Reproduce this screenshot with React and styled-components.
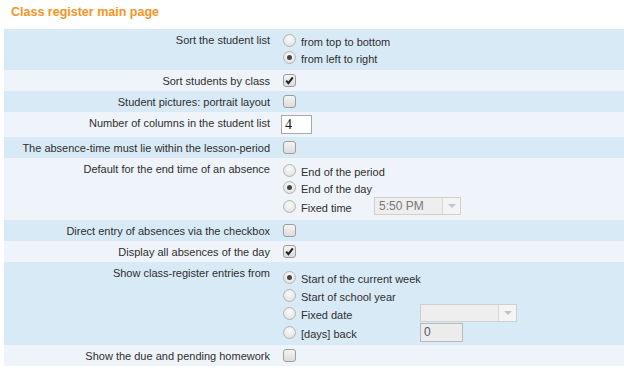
import React from 'react'
import styled, { createGlobalStyle } from 'styled-components'

const GlobalStyle = createGlobalStyle`
  html, body {
    margin: 0;
    padding: 0;
    background: #fff;
  }
  body {
    font-family: "Liberation Sans", Arial, sans-serif;
    font-size: 11px;
    color: #2e2e2e;
  }
`

const Page = styled.div`
  width: 640px;
  padding: 4px 0 0 4px;
`

const Title = styled.h1`
  margin: 0 0 9px 7px;
  font-size: 12.5px;
  font-weight: bold;
  line-height: 16px;
  color: #f7931e;
`

const Table = styled.div`
  display: grid;
  grid-template-columns: 270px 1fr;
`

const Row = styled.div`
  display: contents;

  & > * {
    background: ${p => (p.dark ? '#d9eaf7' : '#eef4fa')};
  }
`

const Label = styled.div`
  text-align: right;
  padding: 5px 4px 0 0;
  line-height: 13px;
  min-height: 16px;
`

const Control = styled.div`
  display: flex;
  flex-direction: column;
  padding: ${p => p.pad || '3px 0 3px 9px'};
`

const Option = styled.div`
  display: flex;
  align-items: center;
  height: ${p => p.h || 17}px;
`

const OptionText = styled.span`
  margin-left: 5px;
  width: ${p => (p.w ? `${p.w}px` : 'auto')};
  padding-top: 3px;
`

const Radio = styled.span`
  box-sizing: border-box;
  width: 13px;
  height: 13px;
  border-radius: 50%;
  border: 1px solid #b4b4b4;
  background: radial-gradient(circle at 50% 35%, #fafafa 0%, #e6e6e6 70%, #d6d6d6 100%);
  display: flex;
  align-items: center;
  justify-content: center;
  flex-shrink: 0;

  &::after {
    content: '';
    display: ${p => (p.checked ? 'block' : 'none')};
    width: 5px;
    height: 5px;
    border-radius: 50%;
    background: #444;
  }
`

const Box = styled.span`
  box-sizing: border-box;
  width: 13px;
  height: 13px;
  border-radius: 3px;
  border: 1px solid #9d9d9d;
  background: linear-gradient(#f4f4f4, #dcdcdc);
  display: flex;
  align-items: center;
  justify-content: center;
  margin-top: 1px;
`

const NumberInput = styled.div`
  box-sizing: border-box;
  width: ${p => p.w || 31}px;
  height: 19px;
  border: 1px solid ${p => (p.disabled ? '#b9b9b9' : '#a9a9a9')};
  background: ${p => (p.disabled ? '#ececec' : '#fff')};
  font-family: ${p => (p.disabled ? '"Liberation Sans", Arial, sans-serif' : '"Liberation Serif", "Times New Roman", serif')};
  font-size: ${p => (p.disabled ? 12 : 14)}px;
  color: ${p => (p.disabled ? '#555' : '#111')};
  line-height: 17px;
  padding-left: 3px;
`

const Select = styled.div`
  box-sizing: border-box;
  width: ${p => p.w}px;
  height: 18px;
  border: 1px solid #cfcfcf;
  background: #eeeeee;
  display: flex;
  align-items: center;
  color: #777;
  font-size: 12px;
`

const SelectValue = styled.span`
  flex: 1;
  padding-left: 4px;
`

const SelectArrow = styled.span`
  box-sizing: border-box;
  width: 18px;
  height: 100%;
  border-left: 1px solid #d8d8d8;
  background: #f4f4f4;
  display: flex;
  align-items: center;
  justify-content: center;

  &::after {
    content: '';
    border-left: 4px solid transparent;
    border-right: 4px solid transparent;
    border-top: 4px solid #c4c4c4;
  }
`

const Check = () => (
  <svg width="9" height="9" viewBox="0 0 9 9">
    <path d="M1.2 4.6 L3.4 7.2 L7.8 1.4" fill="none" stroke="#222" strokeWidth="2" />
  </svg>
)

const Checkbox = ({ checked }) => <Box>{checked && <Check />}</Box>

const RadioOption = ({ checked, children, w, h, after }) => (
  <Option h={h}>
    <Radio checked={checked} />
    <OptionText w={w}>{children}</OptionText>
    {after}
  </Option>
)

export default function App() {
  return (
    <Page>
      <GlobalStyle />
      <Title>Class register main page</Title>
      <Table>
        <Row dark>
          <Label>Sort the student list</Label>
          <Control pad="3px 0 4px 9px">
            <RadioOption>from top to bottom</RadioOption>
            <RadioOption checked>from left to right</RadioOption>
          </Control>
        </Row>
        <Row>
          <Label>Sort students by class</Label>
          <Control>
            <Checkbox checked />
          </Control>
        </Row>
        <Row dark>
          <Label>Student pictures: portrait layout</Label>
          <Control>
            <Checkbox />
          </Control>
        </Row>
        <Row>
          <Label>Number of columns in the student list</Label>
          <Control pad="3px 0 3px 7px">
            <NumberInput>4</NumberInput>
          </Control>
        </Row>
        <Row dark>
          <Label>The absence-time must lie within the lesson-period</Label>
          <Control>
            <Checkbox />
          </Control>
        </Row>
        <Row>
          <Label>Default for the end time of an absence</Label>
          <Control pad="4px 0 4px 9px">
            <RadioOption>End of the period</RadioOption>
            <RadioOption checked>End of the day</RadioOption>
            <RadioOption
              h={20}
              w={73}
              after={
                <Select w={87}>
                  <SelectValue>5:50 PM</SelectValue>
                  <SelectArrow />
                </Select>
              }
            >
              Fixed time
            </RadioOption>
          </Control>
        </Row>
        <Row dark>
          <Label>Direct entry of absences via the checkbox</Label>
          <Control>
            <Checkbox />
          </Control>
        </Row>
        <Row>
          <Label>Display all absences of the day</Label>
          <Control>
            <Checkbox checked />
          </Control>
        </Row>
        <Row dark>
          <Label>Show class-register entries from</Label>
          <Control pad="6px 0 3px 9px">
            <RadioOption checked h={18}>Start of the current week</RadioOption>
            <RadioOption h={18}>Start of school year</RadioOption>
            <RadioOption
              h={18}
              w={119}
              after={
                <Select w={97}>
                  <SelectValue />
                  <SelectArrow />
                </Select>
              }
            >
              Fixed date
            </RadioOption>
            <RadioOption
              h={20}
              w={119}
              after={
                <NumberInput disabled w={43}>
                  0
                </NumberInput>
              }
            >
              [days] back
            </RadioOption>
          </Control>
        </Row>
        <Row>
          <Label>Show the due and pending homework</Label>
          <Control>
            <Checkbox />
          </Control>
        </Row>
      </Table>
    </Page>
  )
}
